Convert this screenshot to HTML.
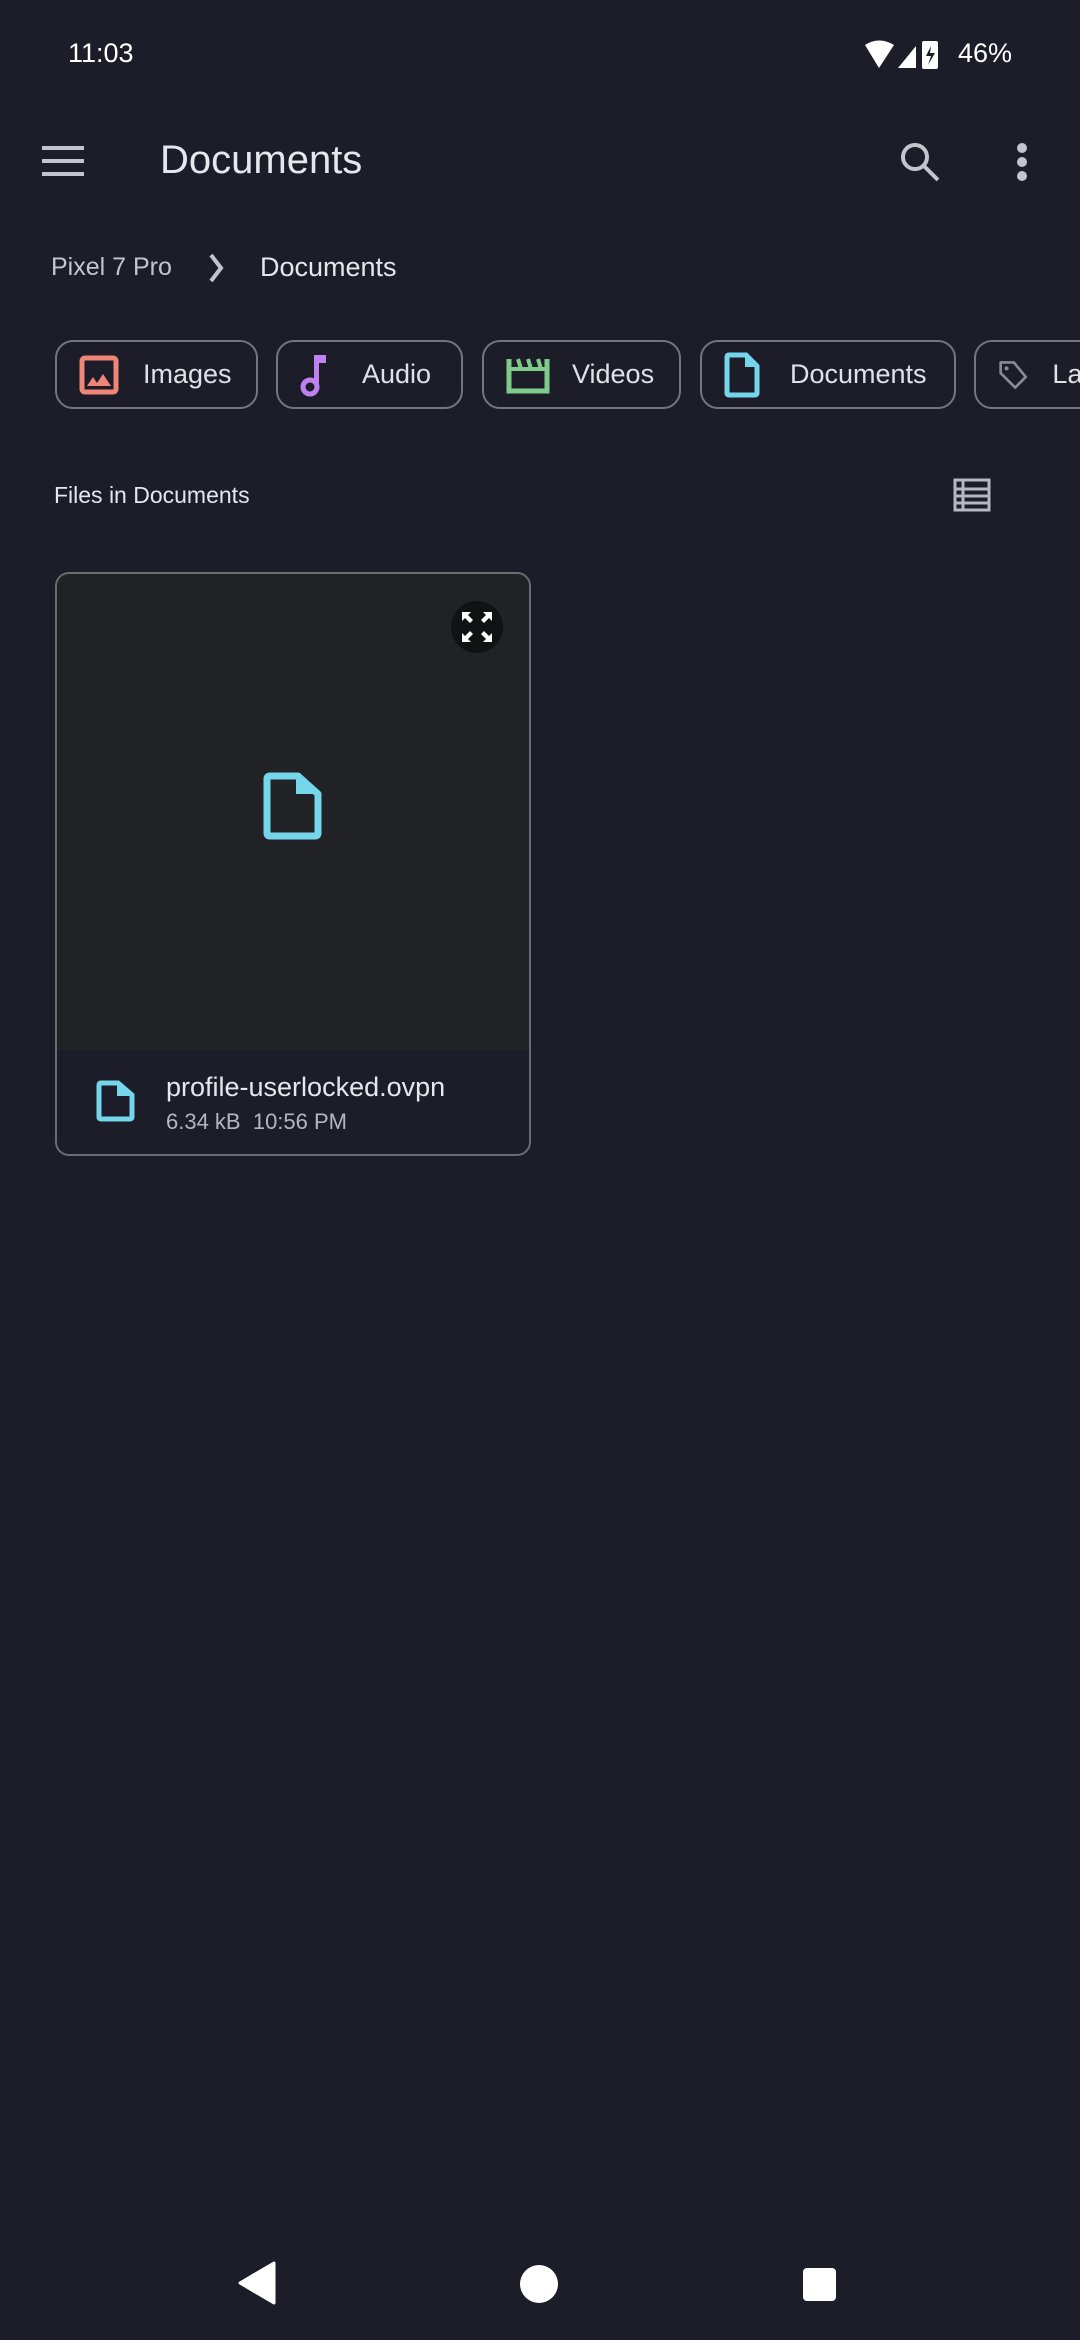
<!DOCTYPE html>
<html><head><meta charset="utf-8"><style>
*{margin:0;padding:0;box-sizing:border-box}
body{width:1080px;height:2340px;background:#1c1d28;font-family:"Liberation Sans",sans-serif;color:#e3e3e8;position:relative;overflow:hidden}
.a{position:absolute}
.chip{position:absolute;top:340px;height:69px;border:2px solid #74767e;border-radius:18px;display:flex;align-items:center;font-size:27px;color:#e0e1e6}
.chip svg{margin-left:22px;margin-right:24px}
</style></head><body>
<div class="a" style="left:68px;top:38px;font-size:27px;color:#fff">11:03</div>
<svg class="a" style="left:864px;top:38px" width="130" height="34" viewBox="0 0 130 34">
<path d="M1 7 Q15 -2 30 7 L15 30 Z" fill="#fff"/>
<path d="M34 30 L52 8 L52 30 Z" fill="#fff"/>
<rect x="58" y="3" width="16" height="28" rx="2" fill="#fff"/>
<path d="M67 8 L62 18 L67 18 L64 27 L71 15 L66 15 Z" fill="#1c1d28"/>
</svg>
<div class="a" style="left:958px;top:38px;font-size:27px;color:#fff">46%</div>
<svg class="a" style="left:42px;top:146px" width="42" height="30"><rect y="0" width="42" height="4" fill="#c4c5cc"/><rect y="13" width="42" height="4" fill="#c4c5cc"/><rect y="26" width="42" height="4" fill="#c4c5cc"/></svg>
<div class="a" style="left:160px;top:138px;font-size:40px;color:#e6e6ec">Documents</div>
<svg class="a" style="left:898px;top:140px" width="44" height="44" viewBox="0 0 44 44"><circle cx="17" cy="17" r="12" stroke="#c4c5cc" stroke-width="4" fill="none"/><path d="M26 26 L40 40" stroke="#c4c5cc" stroke-width="4"/></svg>
<svg class="a" style="left:1014px;top:142px" width="16" height="40"><circle cx="8" cy="6" r="5" fill="#c4c5cc"/><circle cx="8" cy="20" r="5" fill="#c4c5cc"/><circle cx="8" cy="34" r="5" fill="#c4c5cc"/></svg>
<div class="a" style="left:51px;top:253px;font-size:25px;color:#c4c5cc">Pixel 7 Pro</div>
<svg class="a" style="left:206px;top:252px" width="20" height="32"><path d="M5 3 L15 16 L5 29" stroke="#c4c5cc" stroke-width="4" fill="none"/></svg>
<div class="a" style="left:260px;top:252px;font-size:27px;color:#e6e6ec">Documents</div>

<div class="chip" style="left:55px;width:203px"><svg width="40" height="40" viewBox="0 0 40 40"><rect x="3" y="3" width="34" height="34" rx="3" fill="none" stroke="#ee8576" stroke-width="5"/><path d="M8 31 L14 22 L18 28 L24 19 L32 31 Z" fill="#ee8576"/></svg>Images</div>
<div class="chip" style="left:276px;width:187px"><svg width="30" height="44" viewBox="0 0 30 44" style="margin-right:32px"><rect x="14" y="2" width="12" height="8" fill="#c081f0"/><rect x="14" y="2" width="5" height="30" fill="#c081f0"/><circle cx="10" cy="34" r="7" fill="none" stroke="#c081f0" stroke-width="5"/></svg>Audio</div>
<div class="chip" style="left:482px;width:199px"><svg width="44" height="40" viewBox="0 0 44 40" style="margin-right:22px"><path d="M3 4 L3 36 L41 36 L41 4" fill="none" stroke="#7fcb8a" stroke-width="5"/><path d="M3 14 L41 14" stroke="#7fcb8a" stroke-width="4"/><path d="M12 4 L15 14 M22 4 L25 14 M32 4 L35 14" stroke="#7fcb8a" stroke-width="4"/></svg>Videos</div>
<div class="chip" style="left:700px;width:256px"><svg width="36" height="46" viewBox="0 0 36 46" style="margin-right:30px"><path d="M3 5 Q3 3 5 3 L22 3 L33 14 L33 41 Q33 43 31 43 L5 43 Q3 43 3 41 Z" fill="none" stroke="#75d6eb" stroke-width="5"/><path d="M21 3 L33 15 L21 15 Z" fill="#75d6eb"/></svg>Documents</div>
<div class="chip" style="left:974px;width:160px"><svg width="46" height="46" viewBox="0 0 46 46"><path d="M4 4 L24 4 L42 26 L26 42 L4 20 Z" fill="none" stroke="#8a8c93" stroke-width="4" stroke-linejoin="round"/><circle cx="13" cy="13" r="3" fill="#8a8c93"/></svg>Labels</div>

<div class="a" style="left:54px;top:482px;font-size:23px;color:#e6e6ec">Files in Documents</div>
<svg class="a" style="left:953px;top:478px" width="38" height="34" viewBox="0 0 38 34"><rect x="2" y="2" width="34" height="30" fill="none" stroke="#b7b8bf" stroke-width="3"/><path d="M2 11 H36 M2 18 H36 M2 25 H36 M10 2 V32" stroke="#b7b8bf" stroke-width="3"/></svg>

<div class="a" style="left:55px;top:572px;width:476px;height:584px;border:2px solid #6a6c73;border-radius:14px;overflow:hidden;background:#1c1d28">
 <div style="height:476px;background:#212226;position:relative">
  <div class="a" style="left:394px;top:27px;width:52px;height:52px;border-radius:50%;background:#111214"></div>
  <svg class="a" style="left:404px;top:37px" width="32" height="32" viewBox="0 0 32 32" fill="#fff"><path d="M1 1 H10 L7 4 L12 9 L9 12 L4 7 L1 10Z M31 1 V10 L28 7 L23 12 L20 9 L25 4 L22 1Z M1 31 V22 L4 25 L9 20 L12 23 L7 28 L10 31Z M31 31 H22 L25 28 L20 23 L23 20 L28 25 L31 22Z"/></svg>
  <svg class="a" style="left:206px;top:198px" width="62" height="68" viewBox="0 0 62 68"><path d="M4 7 Q4 4 7 4 L35 4 L55 22 L55 61 Q55 64 52 64 L7 64 Q4 64 4 61 Z" fill="none" stroke="#75d6eb" stroke-width="7" stroke-linejoin="round"/><path d="M33 4 L55 22 L33 22 Z" fill="#75d6eb"/></svg>
 </div>
 <svg class="a" style="left:39px;top:506px" width="40" height="42" viewBox="0 0 40 42"><path d="M3 5 Q3 3 5 3 L22 3 L36 15 L36 37 Q36 39 34 39 L5 39 Q3 39 3 37 Z" fill="none" stroke="#75d6eb" stroke-width="5"/><path d="M21 3 L36 16 L21 16 Z" fill="#75d6eb"/></svg>
 <div class="a" style="left:109px;top:498px;font-size:27px;color:#e6e6ec">profile-userlocked.ovpn</div>
 <div class="a" style="left:109px;top:535px;font-size:22px;color:#b5b6bd">6.34 kB&nbsp; 10:56 PM</div>
</div>

<svg class="a" style="left:238px;top:2261px" width="40" height="44"><path d="M36 2 L36 42 L2 22 Z" fill="#fff" stroke="#fff" stroke-width="3" stroke-linejoin="round"/></svg>
<div class="a" style="left:520px;top:2265px;width:38px;height:38px;border-radius:50%;background:#fff"></div>
<div class="a" style="left:803px;top:2268px;width:33px;height:33px;border-radius:4px;background:#fff"></div>
</body></html>
